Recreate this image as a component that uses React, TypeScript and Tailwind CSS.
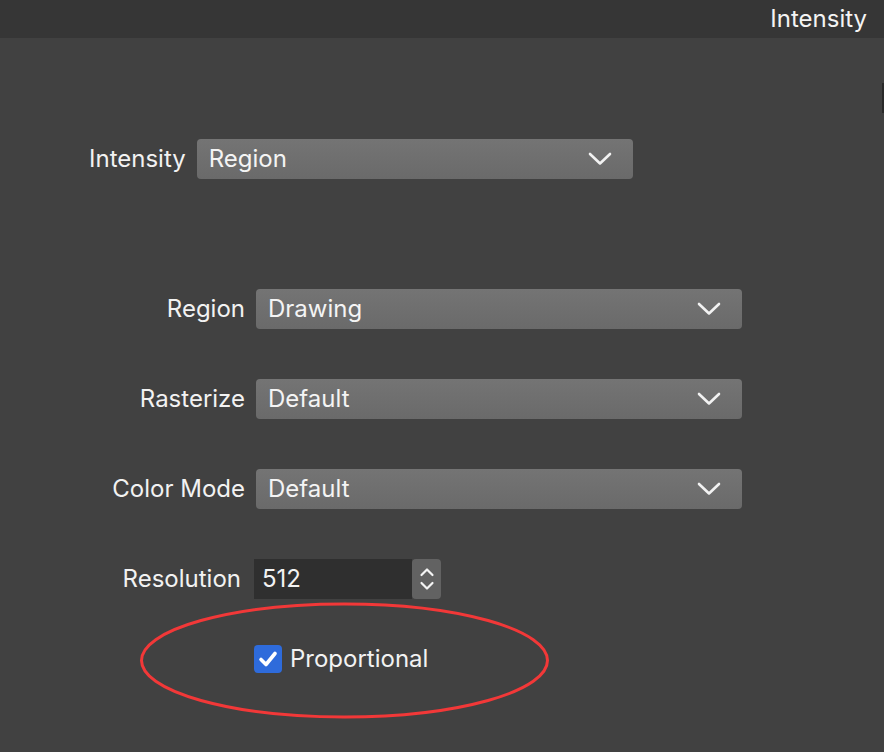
import React from 'react';

const font = { fontFamily: 'Inter, "Noto Sans", sans-serif' };

const Chevron: React.FC = () => (
    <svg width="24" height="14" viewBox="0 0 24 14" fill="none">
        <path d="M2 2 L12 11.5 L22 2" stroke="#f2f2f2" strokeWidth="2.6" strokeLinecap="round" strokeLinejoin="round" />
    </svg>
);

const Select: React.FC<{ value: string; width: string }> = ({ value, width }) => (
    <div className={`${width} h-10 rounded-[4px] bg-gradient-to-b from-[#747474] to-[#6a6a6a] flex items-center justify-between pl-3 pr-[21px]`}>
        <span className="text-[24px] text-[#f4f4f4] leading-none">{value}</span>
        <Chevron />
    </div>
);

export default function App() {
    return (
        <div className="relative w-[884px] h-[752px] bg-[#414141] overflow-hidden text-[#f2f2f2]" style={font}>
            {/* 标题栏 */}
            <div className="h-[38px] bg-[#363636] flex items-center justify-end pr-[17px]">
                <span className="text-[24px] leading-none text-[#f4f4f4]">Intensity</span>
            </div>
            <div className="absolute right-0 top-[83px] w-[2px] h-[30px] bg-[#2a2a2a]" />

            <div className="flex flex-col pt-[101px]">
                {/* Intensity */}
                <div className="flex items-center pl-[89px] gap-[11px]">
                    <span className="text-[24px] leading-none">Intensity</span>
                    <Select value="Region" width="w-[436px]" />
                </div>

                <div className="flex flex-col gap-[50px] mt-[110px]">
                    {[
                        ['Region', 'Drawing'],
                        ['Rasterize', 'Default'],
                        ['Color Mode', 'Default'],
                    ].map(([label, value]) => (
                        <div key={label} className="flex items-center gap-[11px]">
                            <span className="w-[245px] text-right text-[24px] leading-none">{label}</span>
                            <Select value={value} width="w-[486px]" />
                        </div>
                    ))}

                    {/* Resolution */}
                    <div className="flex items-center">
                        <span className="w-[241px] text-right text-[24px] leading-none">Resolution</span>
                        <div className="ml-[13px] w-[158px] h-10 bg-[#2f2f2f] flex items-center pl-2 text-[24px] leading-none">512</div>
                        <div className="w-[29px] h-10 rounded-[4px] bg-[#626262] flex items-center justify-center">
                            <svg width="16" height="28" viewBox="0 0 16 28" fill="none">
                                <path d="M2.5 10 L8 4.5 L13.5 10" stroke="#f4f4f4" strokeWidth="2.2" strokeLinecap="round" strokeLinejoin="round" />
                                <path d="M2.5 18 L8 23.5 L13.5 18" stroke="#f4f4f4" strokeWidth="2.2" strokeLinecap="round" strokeLinejoin="round" />
                            </svg>
                        </div>
                    </div>
                </div>

                {/* Proportional */}
                <div className="flex items-center ml-[254px] mt-[46px] gap-2">
                    <div className="w-[28px] h-[28px] rounded-[4px] bg-[#2e6bdb] flex items-center justify-center">
                        <svg width="20" height="18" viewBox="0 0 20 18" fill="none">
                            <path d="M3 9.5 L8 14.5 L17 3.5" stroke="#ffffff" strokeWidth="3.6" strokeLinecap="round" strokeLinejoin="round" />
                        </svg>
                    </div>
                    <span className="text-[24px] leading-none">Proportional</span>
                </div>
            </div>

            {/* 红色标注圈 */}
            <svg className="absolute left-0 top-0 pointer-events-none" width="884" height="752">
                <ellipse cx="344.5" cy="660.5" rx="203" ry="56.5" fill="none" stroke="#f23838" strokeWidth="3" />
            </svg>
        </div>
    );
}
